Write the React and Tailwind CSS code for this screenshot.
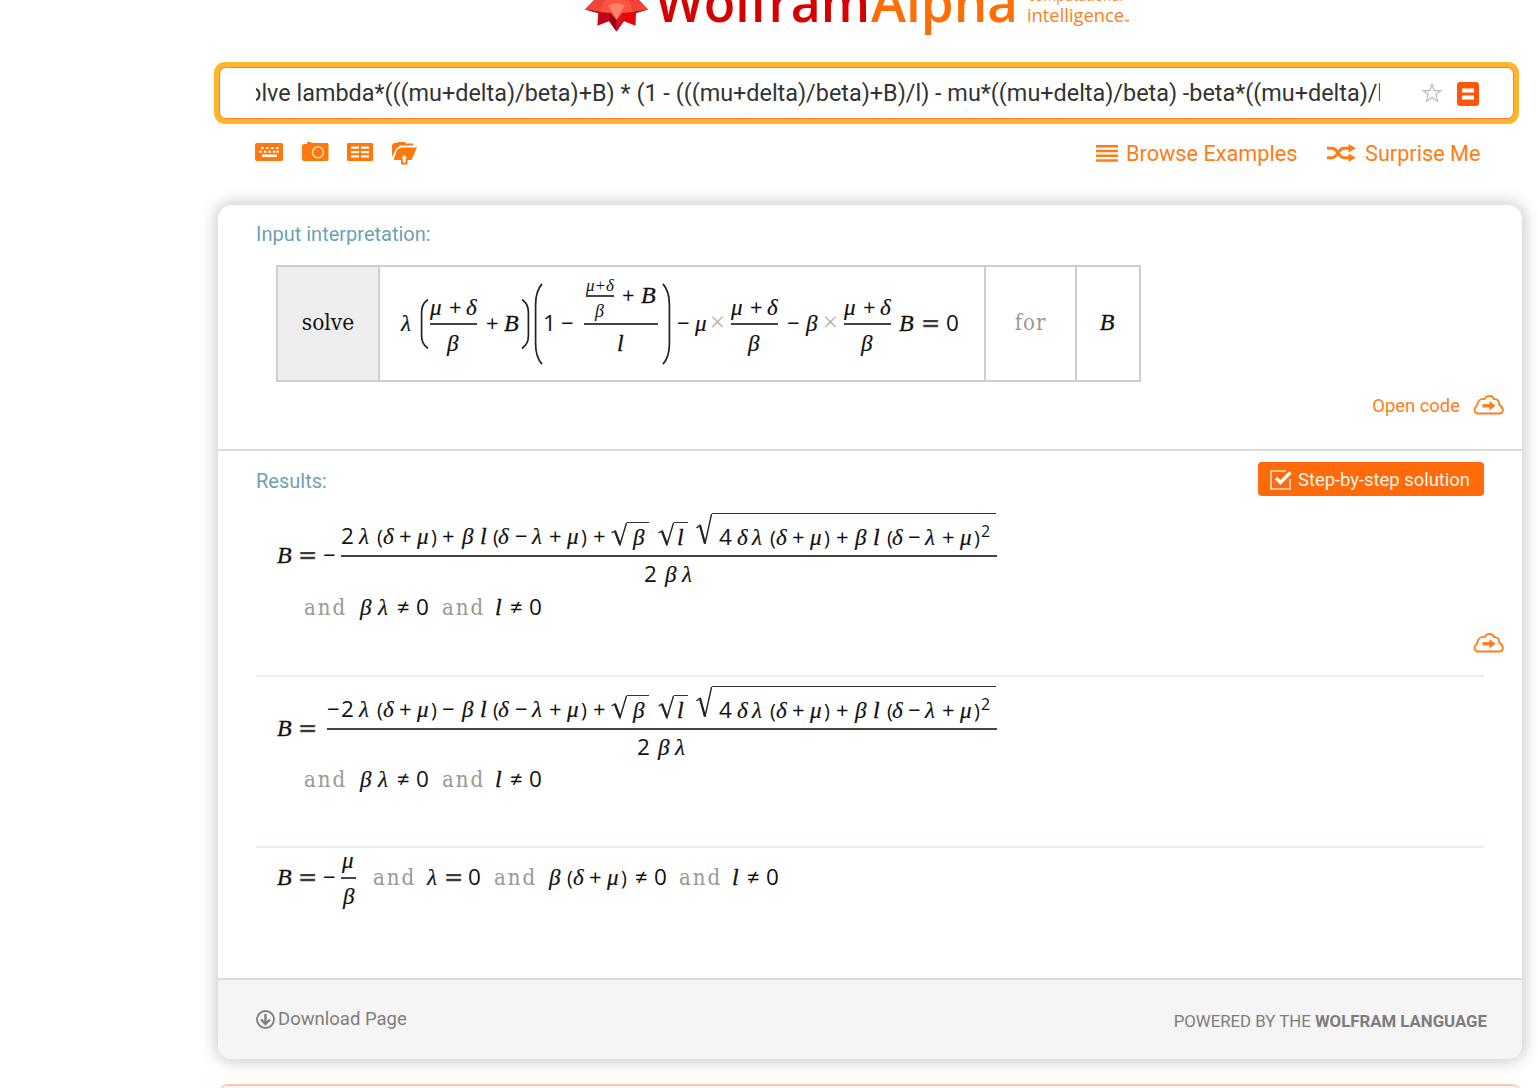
import React from "react";

const FONTS = {
  italic: "font-['Liberation_Serif'] italic text-[24px] [-webkit-text-stroke:0.3px_#111]",
  greek: "font-['Liberation_Serif'] italic text-[23px] [-webkit-text-stroke:0.2px_#111]",
  digit: "font-['Open_Sans'] text-[22.5px]",
  op: "font-['Open_Sans'] text-[22px]",
  equals: "font-['DejaVu_Sans'] text-[23px] text-[#333] indent-[-2px] [-webkit-text-stroke:0.4px_#555]",
  paren: "font-['Open_Sans'] text-[20px]",
  word: "font-['DejaVu_Serif'] text-[#999] text-[22px] tracking-[2px] [font-stretch:condensed]",
  times: "font-['Open_Sans'] text-[#aaa] text-[26px] font-light",
};

function kindOf(t) {
  if (/^[0-9]$/.test(t)) return FONTS.digit;
  if (t === "=") return FONTS.equals;
  if (/^[+−≠]$/.test(t)) return FONTS.op;
  if (/^[()]$/.test(t)) return FONTS.paren;
  if (t === "×") return FONTS.times;
  if (t.length > 1) return FONTS.word;
  if (/^[a-zA-Z]$/.test(t)) return FONTS.italic;
  return FONTS.greek;
}

/* A line of math: each term is [content, start]; a slot is as wide as the step to the next term. */
function Run({ from, to, terms, className = "" }) {
  return (
    <div className={"whitespace-nowrap font-['Liberation_Serif'] text-[24px] text-[#111] " + className}>
      {terms.map(([t, x], i) => {
        const next = i + 1 < terms.length ? terms[i + 1][1] : to;
        const lead = i === 0 ? x - from : 0;
        const text = typeof t === "string";
        return (
          <span
            key={i}
            className={"inline-block whitespace-nowrap " + (text ? "leading-none " + kindOf(t) : "align-middle leading-none")}
            style={{ width: next - x, marginLeft: lead }}
          >
            {t}
          </span>
        );
      })}
    </div>
  );
}

function Frac({ w, top, bottom, half = "h-[30px]" }) {
  return (
    <div className="flex flex-col pb-[3px]" style={{ width: w }}>
      <div className={"flex flex-col justify-end " + half}>{top}</div>
      <div className="h-[1.5px] bg-[#444]" />
      <div className={"flex flex-col justify-start " + half}>{bottom}</div>
    </div>
  );
}

function BigParen({ h, flip }) {
  return (
    <div className="pb-[2px]">
      <svg width="9" height={h} viewBox="0 0 9 50" preserveAspectRatio="none" className={"block " + (flip ? "-scale-x-100" : "")}>
        <path d="M8 .5Q1.6 5 1.6 13V37Q1.6 45 8 49.5" fill="none" stroke="#222" strokeWidth="1.7" vectorEffect="non-scaling-stroke" />
      </svg>
    </div>
  );
}

function Root({ w, tall, children }) {
  return (
    <div className={"flex " + (tall ? "mb-[18px] h-[32px]" : "mb-[8px] h-[24px]")} style={{ width: w }}>
      <svg width="16" height={tall ? 34 : 25} viewBox="0 0 16 25" preserveAspectRatio="none" className="shrink-0">
        <path d="M.5 11L4 9L9 22.5L15.6 .6" fill="none" stroke="#222" strokeWidth="1.4" vectorEffect="non-scaling-stroke" />
        <path d="M4 9L9 22.5" stroke="#222" strokeWidth="2.2" vectorEffect="non-scaling-stroke" />
      </svg>
      <div className="grow border-t-[1.5px] border-[#333]">{children}</div>
    </div>
  );
}

const muDelta = (
  <Frac
    w={47}
    top={<Run from={430} to={477} className="h-[28px] leading-[19px]" terms={[["μ", 430], ["+", 449], ["δ", 466]]} />}
    bottom={<Run from={430} to={477} className="h-[30px] leading-[37px]" terms={[["β", 447]]} />}
  />
);

const smallFrac = (
  <Frac
    w={28}
    half="h-[22px]"
    top={
      <div className="h-[17px] whitespace-nowrap font-['Liberation_Serif'] text-[17px] italic leading-[15px] text-[#111]">
        μ+δ
      </div>
    }
    bottom={<div className="pl-[9px] font-['Liberation_Serif'] text-[18px] italic leading-[28px] text-[#111]">β</div>}
  />
);

const nested = (
  <Frac
    w={74}
    half="h-[52px]"
    top={<Run from={584} to={658} className="h-[50px] leading-[30px]" terms={[[smallFrac, 586], ["+", 622], ["B", 641]]} />}
    bottom={<Run from={584} to={658} className="leading-[36px]" terms={[["l", 617]]} />}
  />
);

const inputTerms = [
  ["λ", 401],
  [<BigParen h={50} />, 420],
  [muDelta, 430],
  ["+", 486],
  ["B", 504],
  [<BigParen h={50} flip />, 521],
  [<BigParen h={82} />, 534],
  ["1", 543],
  ["−", 561],
  [nested, 584],
  [<BigParen h={82} flip />, 662],
  ["−", 677],
  ["μ", 695],
  ["×", 710],
  [muDelta, 731],
  ["−", 787],
  ["β", 806],
  ["×", 823],
  [muDelta, 844],
  ["B", 899],
  ["=", 923],
  ["0", 946],
];

const sqrtBody = (
  <Run
    from={712}
    to={996}
    className="h-[30px] leading-[46px]"
    terms={[
      ["4", 719], ["δ", 737], ["λ", 752], ["(", 770], ["δ", 776], ["+", 792], ["μ", 810], [")", 824], ["+", 836],
      ["β", 855], ["l", 873], ["(", 887], ["δ", 892], ["−", 908], ["λ", 925], ["+", 942], ["μ", 960], [")", 974],
      [<span className="block pb-[18px] font-['Open_Sans'] text-[16px] leading-none">2</span>, 981],
    ]}
  />
);

function numerator(from, sign, lead) {
  return (
    <Run
      from={from}
      to={997}
      className="h-[42px] leading-[44px]"
      terms={[
        ...lead,
        ["2", 341], ["λ", 359], ["(", 377], ["δ", 383], ["+", 399], ["μ", 417], [")", 431], [sign, 442], ["β", 462],
        ["l", 480], ["(", 493], ["δ", 498], ["−", 515], ["λ", 532], ["+", 549], ["μ", 567], [")", 581], ["+", 593],
        [<Root w={38}><Run from={627} to={649} className="h-[20px] leading-[29px]" terms={[["β", 633]]} /></Root>, 611],
        [<Root w={30}><Run from={674} to={688} className="h-[20px] leading-[28px]" terms={[["l", 677]]} /></Root>, 658],
        [<Root w={300} tall>{sqrtBody}</Root>, 696],
      ]}
    />
  );
}

function denominator(from, x) {
  return <Run from={from} to={997} className="leading-[34px]" terms={[["2", x], ["β", x + 21], ["λ", x + 38]]} />;
}

const fracOne = <Frac w={656} half="h-[42px]" top={numerator(341, "+", [])} bottom={denominator(341, 644)} />;
const fracTwo = <Frac w={670} half="h-[42px]" top={numerator(327, "−", [["−", 327]])} bottom={denominator(327, 637)} />;
const fracThree = (
  <Frac
    w={15}
    top={<Run from={341} to={356} className="h-[28px] leading-[20px]" terms={[["μ", 342]]} />}
    bottom={<Run from={341} to={356} className="leading-[35px]" terms={[["β", 343]]} />}
  />
);

const conditions = [
  ["and", 304], ["β", 360], ["λ", 378], ["≠", 397], ["0", 416], ["and", 442], ["l", 495], ["≠", 510], ["0", 529],
];

function CloudIcon() {
  return (
    <svg width="31" height="22" viewBox="0 0 31 22" fill="none" stroke="#ff7d1c" strokeWidth="1.8" strokeLinejoin="round">
      <path d="M5 19.500C1 19.500 .6 15.500 3 12.500C4.500 11.500 4.300 11 5 8.500C6 5.500 9 4.500 11.500 5.200C13.500 .8 19.500 .6 21 5.200C24.500 4.800 26.500 7 26 10.500C28.500 12 30.300 15 29.600 17.600C29 19.300 28 19.500 26 19.500Z" />
      <path d="M9.500 11.800H20" strokeWidth="3.400" />
      <path d="M16.500 7L22.500 11.800L16.500 16.600Z" fill="#ff7d1c" stroke="none" />
    </svg>
  );
}

function Logo() {
  return (
    <svg width="560" height="40" viewBox="580 0 560 40" className="block">
      <path d="M585 9.500L600 -6H633L648 9.500L636 13L635.500 25.500L624 21L616.500 31.500L609 21L597.500 25.500L598 13Z" fill="#d01018" />
      <path d="M585 9.500L594 0H603L607 4L600 12Z" fill="#f0443a" />
      <path d="M585 9.500L600 12L598 13Z" fill="#a90014" />
      <path d="M648 9.500L639 0H630L626 4L633 12Z" fill="#f0443a" />
      <path d="M648 9.500L633 12L636 13Z" fill="#d30c14" />
      <path d="M600 12L611 13L609 21L597.500 25.500Z" fill="#c4001f" />
      <path d="M633 12L622 13L624 21L635.500 25.500Z" fill="#e90505" />
      <path d="M610 12L616.500 20V31.500L609 21Z" fill="#a20015" />
      <path d="M623 12L616.500 20V31.500L624 21Z" fill="#cf1622" />
      <path d="M600 12L604 0H629L633 12L622 13L616.500 20L611 13Z" fill="#fb5542" />
      <path d="M608 5L616.500 3L625 5L616.500 19.500Z" fill="#ff806a" />
      <text x="655" y="22" textLength="215" lengthAdjust="spacingAndGlyphs" fontFamily="Open Sans" fontWeight="600" fontSize="54" fill="#d50000">Wolfram</text>
      <text x="871" y="22" textLength="147" lengthAdjust="spacingAndGlyphs" fontFamily="Open Sans" fontWeight="600" fontSize="54" fill="#ff6d05">Alpha</text>
      <text x="1028" y="0.500" textLength="95" lengthAdjust="spacingAndGlyphs" fontFamily="Open Sans" fontSize="17" fill="#ff8a33">computational</text>
      <text x="1027" y="21.500" textLength="97" lengthAdjust="spacingAndGlyphs" fontFamily="Open Sans" fontSize="18" fill="#ff7d22">intelligence</text>
      <rect x="1125" y="19.500" width="4" height="2" fill="#ff9a50" />
    </svg>
  );
}

function ToolIcons() {
  return (
    <div className="flex items-start pt-[18px]">
      <svg width="28" height="20" viewBox="0 0 28 20" className="mr-[19px]">
        <rect x="0" y="1" width="28" height="18" rx="2" fill="#ff780a" />
        <g fill="#fff">
          {[7, 12, 17, 22].map((x) => <rect key={x} x={x - 1} y="5" width="2.6" height="2" />)}
          {[5, 9.5, 14, 18.5, 22].map((x) => <rect key={x} x={x - 0.6} y="8.7" width="2.4" height="2" />)}
          <rect x="7" y="12.500" width="15" height="2.600" />
        </g>
      </svg>
      <svg width="27" height="20" viewBox="0 0 27 20" className="mr-[18px]">
        <path d="M2 2H5V0H9V1H25Q26.500 1 26.500 3V17Q26.500 19 25 19H2Q0 19 0 17V4Q0 2 2 2Z" fill="#ff780a" />
        <circle cx="16" cy="10.300" r="5.500" fill="none" stroke="#ffe0c4" strokeWidth="1.500" />
      </svg>
      <svg width="26" height="20" viewBox="0 0 26 20" className="mr-[19px]">
        <rect x="0" y="1" width="26" height="18" rx="1" fill="#ff780a" />
        <g fill="#fff">
          {[4.5, 9, 13.3].map((y) => (
            <React.Fragment key={y}>
              <rect x="4" y={y} width="8" height="2.200" />
              <rect x="14" y={y} width="8" height="2.200" />
            </React.Fragment>
          ))}
        </g>
      </svg>
      <svg width="26" height="24" viewBox="0 0 26 24">
        <path d="M0 15V3L2 1H5L6 0H13L14 1.500H21V3.500H8L4 7Z" fill="#ff780a" />
        <path d="M9 5.500H25L19.500 18H1.500L5 8Z" fill="#ff780a" />
        <path d="M12.200 10.500L18 16.500H15.500V22.500H9V16.500H6.500Z" fill="#ff780a" />
        <path d="M12.200 12.800L15 16.200H13.600V20.500H10.800V16.200H9.400Z" fill="#fff" />
      </svg>
    </div>
  );
}

function ShuffleIcon() {
  return (
    <svg width="29" height="18" viewBox="0 0 29 18" fill="none" stroke="#ff7c14" strokeWidth="3">
      <path d="M0 4.300H5C11 4.300 11 13.700 17 13.700H23M0 13.700H5C11 13.700 11 4.300 17 4.300H23" />
      <path d="M21.500 0L29 4.300L21.500 8.600ZM21.500 9.400L29 13.700L21.500 18Z" fill="#ff7c14" stroke="none" />
    </svg>
  );
}

export default function App() {
  return (
    <div className="h-[1088px] w-[1538px] overflow-hidden bg-white font-['Roboto',sans-serif]">
      <header className="h-[62px] pl-[580px]">
        <Logo />
      </header>

      <div className="ml-[214px] h-[62px] w-[1305px] rounded-[11px] bg-[#ffb52b] p-[5px]">
        <div className="flex h-[52px] items-center rounded-[7px] border-[1.5px] border-[#ff7e35] bg-white pl-[36px]">
          <div className="h-[34px] w-[1124px] overflow-hidden whitespace-nowrap text-[23.4px] leading-[34px] text-[#333]">
            <span className="-ml-[20px] inline-block">
              solve lambda*(((mu+delta)/beta)+B) * (1 - (((mu+delta)/beta)+B)/l) - mu*((mu+delta)/beta) -beta*((mu+delta)/beta)*B
            </span>
          </div>
          <svg width="20" height="20" viewBox="0 0 20 20" className="ml-[42px] mt-[-1px]">
            <path d="M10 1.500L12.300 7.600H18.800L13.700 11.700L15.600 18.200L10 14.400L4.400 18.200L6.300 11.700L1.200 7.600H7.700Z" fill="none" stroke="#bbb" strokeWidth="1.200" />
          </svg>
          <svg width="22" height="24" viewBox="0 0 22 24" className="ml-[15px] mt-[2px]">
            <rect width="22" height="24" rx="3" fill="#ff560a" />
            <path d="M5 6.500H17V10.500H5ZM5 13.500H17V17.500H5Z" fill="#fff" />
          </svg>
        </div>
      </div>

      <div className="flex h-[81px] w-[1481px] justify-between pl-[255px] text-[21.7px] text-[#ff7c14]">
        <ToolIcons />
        <div className="mt-[17px] flex h-[26px] items-center">
          <svg width="22" height="17" viewBox="0 0 22 17" fill="#ff7c14" className="mb-[2px]">
            <path d="M0 0H22V2.600H0ZM0 4.700H22V7.300H0ZM0 9.500H22V12.100H0ZM0 14.200H22V16.800H0Z" />
          </svg>
          <span className="ml-[8px] w-[172px] whitespace-nowrap">Browse Examples</span>
          <span className="mb-[2px] ml-[29px] flex"><ShuffleIcon /></span>
          <span className="ml-[9px] w-[116px] whitespace-nowrap">Surprise Me</span>
        </div>
      </div>

      <main className="ml-[218px] h-[854px] w-[1304px] overflow-hidden rounded-[14px] bg-white shadow-[0_0_16px_3px_rgba(0,0,0,0.2)]">
        <section className="h-[246px] border-b-2 border-[#dcdcdc]">
          <h2 className="pl-[38px] pt-[16px] text-[20px] leading-[26px] text-[#6f9fb5]">Input interpretation:</h2>
          <div className="ml-[58px] mt-[18px] flex h-[117px] w-[865px] border-2 border-[#cecece]">
            <div className="flex w-[102px] items-center justify-center border-r-2 border-[#cecece] bg-[#eee] pb-[1px] font-['DejaVu_Serif'] text-[22.5px] text-[#111] [font-stretch:condensed]">
              solve
            </div>
            <Run from={380} to={984} className="h-[113px] w-[604px] leading-[112px]" terms={inputTerms} />
            <div className="flex w-[93px] items-center justify-center border-x-2 border-[#cecece] pb-[3px] font-['DejaVu_Serif'] text-[22px] tracking-[1px] text-[#999] [font-stretch:condensed]">
              for
            </div>
            <div className="flex grow items-center justify-center pb-[4px] pr-[2px] font-['Liberation_Serif'] text-[24px] italic text-[#111] [-webkit-text-stroke:0.3px_#111]">B</div>
          </div>
          <div className="mr-[18px] mt-[10px] flex h-[26px] items-center justify-end gap-[13px] text-[18.4px] text-[#ff7d1c]">
            <span className="pt-[1px]">Open code</span>
            <CloudIcon />
          </div>
        </section>

        <section className="h-[527px]">
          <div className="flex h-[55px] justify-between pl-[38px] pr-[38px]">
            <h2 className="pt-[17px] text-[20px] leading-[26px] text-[#6f9fb5]">Results:</h2>
            <button className="mt-[11px] flex h-[34px] w-[226px] items-center rounded-[4px] bg-[#ff6b0a] pl-[12px] pt-[1px] text-[18.4px] text-[#fff3e8]">
              <svg width="22" height="22" viewBox="0 0 22 22" fill="none" stroke="#ffe0c4">
                <path d="M16 2H1V20H20V10" strokeWidth="1.600" />
                <path d="M6 9L10.500 13.500L20.500 3.500" stroke="#fff" strokeWidth="3.200" />
              </svg>
              <span className="ml-[6px] whitespace-nowrap pt-[1px]">Step-by-step solution</span>
            </button>
          </div>

          <article className="mx-[38px] h-[171px] border-b-2 border-[#e3f0f2]">
            <Run from={256} to={1000} className="h-[86px] leading-[98px]" terms={[["B", 277], ["=", 300], ["−", 323], [fracOne, 341]]} />
            <Run from={256} to={542} className="h-[30px] leading-[30px]" terms={conditions} />
            <div className="-mr-[20px] mt-[10px] flex justify-end"><CloudIcon /></div>
          </article>

          <article className="mx-[38px] h-[171px] border-b-2 border-[#e3f0f2]">
            <Run from={256} to={1000} className="h-[87px] leading-[102px]" terms={[["B", 277], ["=", 300], [fracTwo, 327]]} />
            <Run from={256} to={542} className="h-[30px] leading-[30px]" terms={conditions} />
          </article>

          <article className="mx-[38px] h-[130px]">
            <div className="-mt-[1px]">
              <Run
                from={256}
                to={780}
                className="h-[64px] leading-[58px]"
                terms={[
                  ["B", 277], ["=", 300], ["−", 323], [fracThree, 341], ["and", 373], ["λ", 427], ["=", 446], ["0", 468],
                  ["and", 494], ["β", 549], ["(", 567], ["δ", 573], ["+", 589], ["μ", 607], [")", 621], ["≠", 635],
                  ["0", 654], ["and", 679], ["l", 732], ["≠", 747], ["0", 766],
                ]}
              />
            </div>
          </article>
        </section>

        <footer className="flex h-[81px] items-center justify-between border-t-2 border-[#dcdcdc] bg-[#f5f5f5] pl-[38px] pr-[35px] text-[#7d7d7d]">
          <div className="flex items-center gap-[3px] text-[18.5px]">
            <svg width="19" height="19" viewBox="0 0 19 19" fill="none" stroke="#808080">
              <circle cx="9.500" cy="9.500" r="8.500" strokeWidth="1.800" />
              <path d="M9.500 4V14M5 9.500L9.500 14L14 9.500" strokeWidth="2.400" />
            </svg>
            <span className="pt-[1px]">Download Page</span>
          </div>
          <div className="pt-[4px] text-[16.8px]">
            POWERED BY THE <b>WOLFRAM LANGUAGE</b>
          </div>
        </footer>
      </main>

      <div className="ml-[218px] mt-[25px] h-[20px] w-[1304px] rounded-[12px] border-t-2 border-[#ffc5a8] bg-[#fffaf7]" />
    </div>
  );
}
